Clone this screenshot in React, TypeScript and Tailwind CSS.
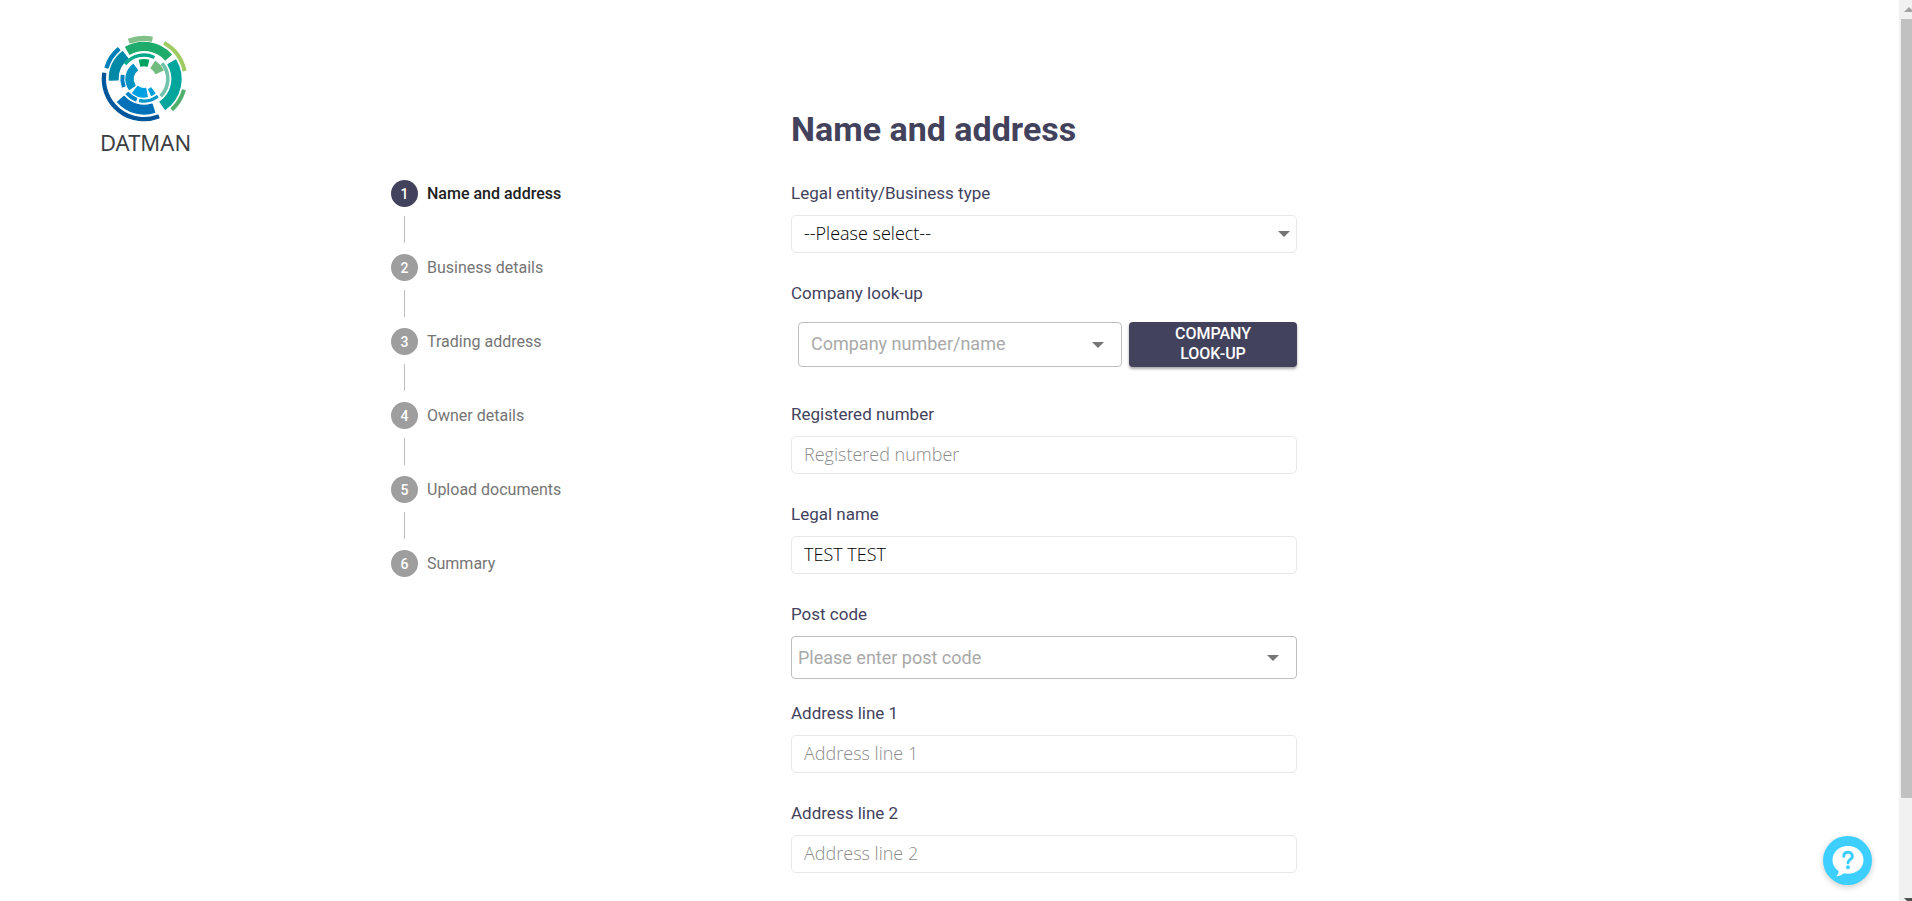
import { useState } from "react"
import type { ReactNode } from "react"

const steps = [
    "Name and address",
    "Business details",
    "Trading address",
    "Owner details",
    "Upload documents",
    "Summary",
]

// inner radius, outer radius, start angle, end angle, colour
const logoSegments: [number, number, number, number, string][] = [
    [114, 130, -112, -78, "#82c08a"],
    [118, 130, -61, -11, "#a0ca62"],
    [118, 130, 15, 48, "#50b06e"],
    [114, 127, 68, 189, "#00569a"],
    [111, 124, 196, 231, "#0080ba"],
    [84, 112, -121, -41, "#1eab6c"],
    [82, 113, -32, 56, "#00a59c"],
    [76, 106, 177, 233, "#0089a6"],
    [77, 107, 71, 140, "#0070b8"],
    [67, 77, -142, -64, "#00a88c"],
    [66, 77, -41, 46, "#70c3ab"],
    [61, 71, 51, 103, "#0098cc"],
    [60, 72, 109, 141, "#0085c8"],
    [59, 71, 158, 191, "#0080c4"],
    [31, 56, 142, 236, "#0092c2"],
    [27, 56, 77, 132, "#00a0e3"],
    [32, 56, 50, 68, "#00a0dc"],
    [38, 60, -106, -74, "#00a35e"],
    [37, 65, -59, -23, "#72bb7f"],
]

function sector(inner: number, outer: number, from: number, to: number) {
    const point = (r: number, deg: number) => {
        const a = (deg * Math.PI) / 180
        return `${(r * Math.cos(a)).toFixed(2)} ${(r * Math.sin(a)).toFixed(2)}`
    }
    // the rounded outline adds 2 units on every side
    const i = inner + 2
    const o = outer - 2
    const pad = 115 / ((i + o) / 2)
    const s = from + pad
    const e = to - pad
    return `M${point(o, s)}A${o} ${o} 0 0 1 ${point(o, e)}L${point(i, e)}A${i} ${i} 0 0 0 ${point(i, s)}Z`
}

function Logo() {
    return (
        <a href="#" className="flex w-[92px] flex-col items-start">
            <svg viewBox="-132 -132 264 264" className="size-[88px]" aria-hidden="true">
                {logoSegments.map(([inner, outer, from, to, color]) => (
                    <path
                        key={`${inner}-${from}`}
                        d={sector(inner, outer, from, to)}
                        fill={color}
                        stroke={color}
                        strokeWidth="4"
                        strokeLinejoin="round"
                    />
                ))}
            </svg>
            <span className="mt-[3px] font-['Noto_Sans'] text-[22px] leading-8 text-[#3b4045]">DATMAN</span>
        </a>
    )
}

function Caret() {
    return (
        <svg viewBox="0 0 12 6" className="h-[6px] w-[12px] fill-[#757575]" aria-hidden="true">
            <path d="M0 0h12L6 6z" />
        </svg>
    )
}

function Stepper() {
    return (
        <ol className="pt-[180px]">
            {steps.map((step, i) => (
                <li key={step}>
                    {i > 0 && <div className="mt-[9px] mb-[11px] ml-[13px] h-[27px] w-px bg-[#bdbdbd]"></div>}
                    <div className="flex items-center gap-[9px]">
                        <span
                            className={
                                i === 0
                                    ? "flex size-[27px] items-center justify-center rounded-full bg-[#43425d] text-sm font-medium text-white"
                                    : "flex size-[27px] items-center justify-center rounded-full bg-[#9e9e9e] text-sm font-medium text-white"
                            }
                        >
                            {i + 1}
                        </span>
                        <span className={i === 0 ? "text-base font-medium text-[#212121]" : "text-base text-[#757575]"}>
                            {step}
                        </span>
                    </div>
                </li>
            ))}
        </ol>
    )
}

function Field({ id, label, children }: { id: string; label: string; children: ReactNode }) {
    return (
        <div>
            <label htmlFor={id} className="mb-2 block text-[17px] leading-7 text-[#43425d]">
                {label}
            </label>
            {children}
        </div>
    )
}

const inputClass =
    "block h-[38px] w-full rounded-[5px] border border-[#e8e8ec] bg-white px-3 pb-[2px] font-['Open_Sans'] text-lg font-light text-black outline-none placeholder:text-[#8c8c8c]"

export default function App() {
    const [legalName, setLegalName] = useState("TEST TEST")

    return (
        <div className="flex h-screen overflow-hidden bg-white font-[Roboto,sans-serif]">
            <div className="grid flex-1 grid-cols-[391fr_400fr_506fr_602fr]">
                <header className="pt-[35px] pl-[100px]">
                    <Logo />
                </header>

                <nav aria-label="Progress">
                    <Stepper />
                </nav>

                <main className="pt-[109px]">
                    <h1 className="text-[34px] leading-10 font-bold text-[#43425d]">Name and address</h1>
                    <form className="mt-[30px] flex flex-col gap-[26px]">
                        <Field id="type" label="Legal entity/Business type">
                            <div className="relative">
                                <select id="type" className={`${inputClass} appearance-none`}>
                                    <option>--Please select--</option>
                                </select>
                                <span className="pointer-events-none absolute inset-y-0 right-[7px] flex items-center">
                                    <Caret />
                                </span>
                            </div>
                        </Field>

                        <Field id="company" label="Company look-up">
                            <div className="mt-[15px] mb-[7px] flex h-[45px] gap-[7px] pl-[7px]">
                                <div className="flex min-w-0 flex-1 items-center rounded border border-[#bfbfbf] pr-[17px] pl-3">
                                    <input
                                        id="company"
                                        placeholder="Company number/name"
                                        className="min-w-0 flex-1 pb-[2px] text-lg outline-none placeholder:text-[#a9a9a9]"
                                    />
                                    <Caret />
                                </div>
                                <button
                                    type="button"
                                    className="w-[168px] rounded bg-[#43425d] px-9 pb-[2px] text-base leading-5 font-medium text-white shadow-[0_2px_3px_rgba(0,0,0,0.35)]"
                                >
                                    COMPANY LOOK-UP
                                </button>
                            </div>
                        </Field>

                        <Field id="number" label="Registered number">
                            <input id="number" placeholder="Registered number" className={inputClass} />
                        </Field>

                        <Field id="name" label="Legal name">
                            <input
                                id="name"
                                value={legalName}
                                onChange={(e) => setLegalName(e.target.value)}
                                className={inputClass}
                            />
                        </Field>

                        <Field id="postcode" label="Post code">
                            <div className="-mb-[6px] flex h-[43px] items-center rounded border border-[#bfbfbf] pr-[17px] pl-[6px]">
                                <input
                                    id="postcode"
                                    placeholder="Please enter post code"
                                    className="min-w-0 flex-1 text-lg outline-none placeholder:text-[#a9a9a9]"
                                />
                                <Caret />
                            </div>
                        </Field>

                        <Field id="address1" label="Address line 1">
                            <input id="address1" placeholder="Address line 1" className={inputClass} />
                        </Field>

                        <Field id="address2" label="Address line 2">
                            <input id="address2" placeholder="Address line 2" className={inputClass} />
                        </Field>
                    </form>
                </main>
            </div>

            <div className="flex w-[13px] flex-col items-end bg-[#f1f1f1]" aria-hidden="true">
                <svg viewBox="0 0 11 19" className="h-[19px] w-[11px] shrink-0">
                    <path d="M3 12l5-5 3 3v2z" fill="#a3a3a3" />
                </svg>
                <div className="w-[11px] grow bg-[#c1c1c1]"></div>
                <div className="flex h-[103px] shrink-0 items-end">
                    <svg viewBox="0 0 8 3" className="h-[3px] w-[8px]">
                        <path d="M0 0h8v3H3z" fill="#505050" />
                    </svg>
                </div>
            </div>

            <button
                type="button"
                aria-label="Help"
                className="fixed right-10 bottom-4 flex size-[49px] items-center justify-center rounded-full bg-[#3dcfff] shadow-[0_2px_6px_rgba(0,0,0,0.2)]"
            >
                <svg viewBox="0 0 32 32" className="size-8" fill="none" aria-hidden="true">
                    <path
                        d="M16 1C7.400 1 .5 7 .5 15c0 4.600 2.500 8.600 6.200 11.100-.2 2-1 3.600-2.300 5.200 3.200-.3 5.700-1.400 7.600-3 1.300.3 2.600.5 4 .5 8.600 0 15.500-5.800 15.500-13.800S24.600 1 16 1z"
                        fill="#fff"
                    />
                    <path
                        d="M11.800 11.200C11.800 8.700 13.600 7.200 16 7.200s4.400 1.600 4.400 4c0 3.400-4.400 3.300-4.400 6.600"
                        stroke="#3dcfff"
                        strokeWidth="3"
                        strokeLinecap="round"
                    />
                    <circle cx="16" cy="22.300" r="2" fill="#3dcfff" />
                </svg>
            </button>
        </div>
    )
}
